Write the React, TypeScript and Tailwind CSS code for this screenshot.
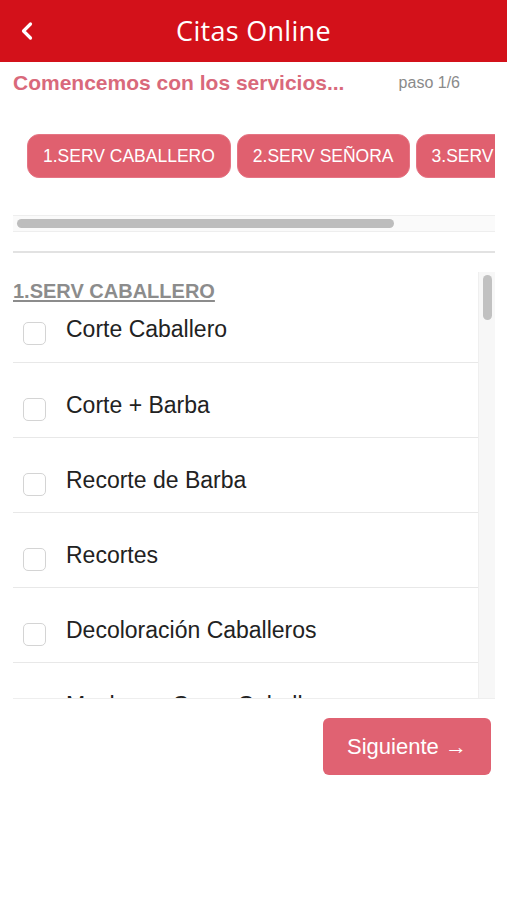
import { ChevronLeft } from 'lucide-react';

const services = [
    'Corte Caballero',
    'Corte + Barba',
    'Recorte de Barba',
    'Recortes',
    'Decoloración Caballeros',
    'Mechas o Gorro Caballeros',
];

const categories = ['1.SERV CABALLERO', '2.SERV SEÑORA', '3.SERV COLOR'];

function Checkbox() {
    return <div className="w-[23px] h-[23px] shrink-0 rounded-[5px] border-[1.5px] border-[#d4d4d4] bg-white" />;
}

function ServiceRow({ name }: { name: string }) {
    return (
        <div className="h-[75px] shrink-0 flex items-start gap-[20px] pl-[10px] pt-[28px] border-b border-[#e8e8e8]">
            <div className="mt-[7px]">
                <Checkbox />
            </div>
            <span className="text-[23px] leading-[28px] text-[#222]">{name}</span>
        </div>
    );
}

export default function App() {
    return (
        <div className="w-[507px] h-[900px] bg-white flex flex-col" style={{ fontFamily: '"Liberation Sans", Arial, sans-serif' }}>
            {/* Header */}
            <header className="h-[62px] shrink-0 bg-[#d3111a] grid grid-cols-[60px_1fr_60px] items-center">
                <ChevronLeft className="ml-[13px] w-[28px] h-[28px] text-white" strokeWidth={2.75} />
                <h1 className="text-center text-white text-[27px] font-medium tracking-[0.3px]" style={{ fontFamily: '"Open Sans", sans-serif' }}>
                    Citas Online
                </h1>
                <div />
            </header>

            <div className="flex flex-col px-[13px] pr-[12px]">
                {/* Step line */}
                <div className="flex items-center justify-between pt-[9px] pr-[35px]">
                    <span className="text-[21px] leading-[24px] font-bold text-[#d9697b]">Comencemos con los servicios...</span>
                    <span className="text-[16px] text-[#8a8a8a]">paso 1/6</span>
                </div>

                {/* Category chips */}
                <div className="mt-[39px] flex gap-[6px] pl-[14px] overflow-hidden">
                    {categories.map((c) => (
                        <button
                            key={c}
                            className="h-[44px] shrink-0 px-[15px] rounded-[12px] bg-[#e0606f] border border-[#e57584] text-white text-[17.5px] whitespace-nowrap"
                        >
                            {c}
                        </button>
                    ))}
                </div>

                {/* Horizontal scrollbar */}
                <div className="mt-[37px] h-[17px] bg-[#fafafa] border-y border-[#eeeeee] flex items-center px-[4px]">
                    <div className="w-[377px] h-[9px] rounded-full bg-[#bdbdbd]" />
                </div>

                <div className="mt-[19px] h-[2px] bg-[#e2e2e2]" />

                {/* Service list */}
                <div className="mt-[19px] h-[427px] flex overflow-hidden border-b border-[#eeeeee]">
                    <div className="flex-1 flex flex-col overflow-hidden">
                        <div className="h-[91px] shrink-0 flex flex-col border-b border-[#e8e8e8]">
                            <span className="pt-[7px] text-[20px] leading-[24px] font-bold text-[#8c8c8c] underline underline-offset-[2px]">
                                1.SERV CABALLERO
                            </span>
                            <div className="flex items-start gap-[20px] pl-[10px] mt-[12px]">
                                <div className="mt-[7px]">
                                    <Checkbox />
                                </div>
                                <span className="text-[23px] leading-[28px] text-[#222]">{services[0]}</span>
                            </div>
                        </div>
                        {services.slice(1).map((s) => (
                            <ServiceRow key={s} name={s} />
                        ))}
                    </div>
                    <div className="w-[17px] shrink-0 bg-[#f7f7f7] border-l border-[#efefef] pt-[3px] flex justify-center">
                        <div className="w-[9px] h-[45px] rounded-full bg-[#c1c1c1]" />
                    </div>
                </div>

                {/* Next */}
                <div className="mt-[19px] flex justify-end pr-[4px]">
                    <button className="w-[168px] h-[57px] rounded-[6px] bg-[#e06272] text-white text-[22px]">
                        Siguiente →
                    </button>
                </div>
            </div>
        </div>
    );
}
